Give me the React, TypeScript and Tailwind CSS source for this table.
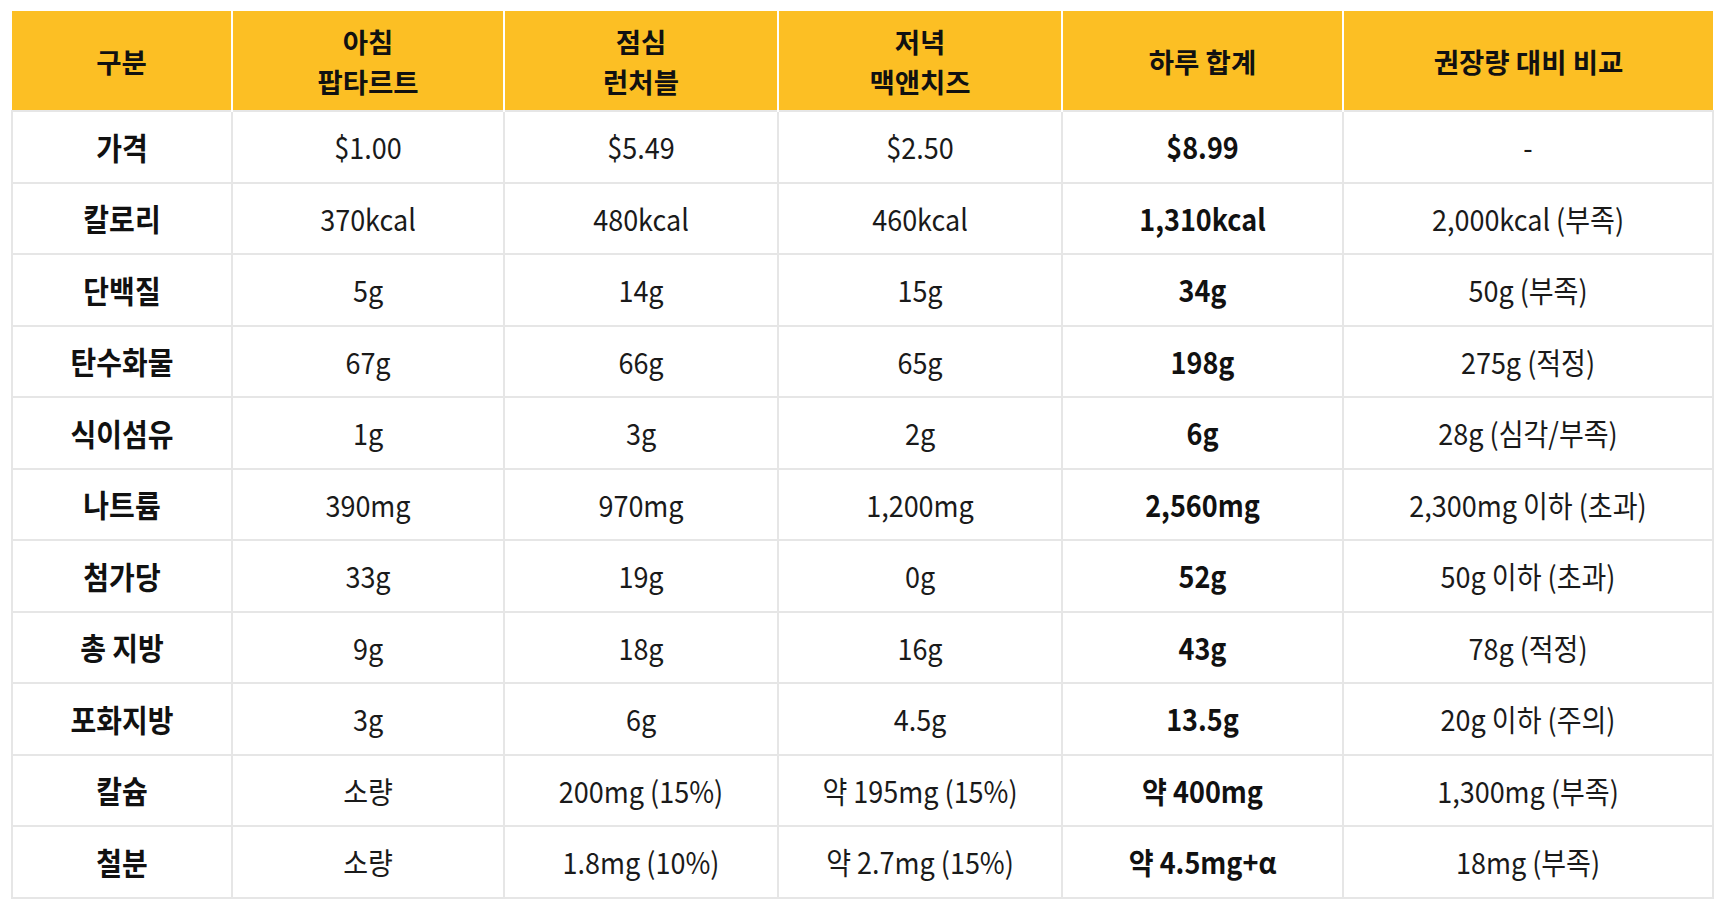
import React from "react";

const headers: string[][] = [
  ["구분"],
  ["아침", "팝타르트"],
  ["점심", "런처블"],
  ["저녁", "맥앤치즈"],
  ["하루 합계"],
  ["권장량 대비 비교"],
];

const rows: string[][] = [
  ["가격", "$1.00", "$5.49", "$2.50", "$8.99", "-"],
  ["칼로리", "370kcal", "480kcal", "460kcal", "1,310kcal", "2,000kcal (부족)"],
  ["단백질", "5g", "14g", "15g", "34g", "50g (부족)"],
  ["탄수화물", "67g", "66g", "65g", "198g", "275g (적정)"],
  ["식이섬유", "1g", "3g", "2g", "6g", "28g (심각/부족)"],
  ["나트륨", "390mg", "970mg", "1,200mg", "2,560mg", "2,300mg 이하 (초과)"],
  ["첨가당", "33g", "19g", "0g", "52g", "50g 이하 (초과)"],
  ["총 지방", "9g", "18g", "16g", "43g", "78g (적정)"],
  ["포화지방", "3g", "6g", "4.5g", "13.5g", "20g 이하 (주의)"],
  ["칼슘", "소량", "200mg (15%)", "약 195mg (15%)", "약 400mg", "1,300mg (부족)"],
  ["철분", "소량", "1.8mg (10%)", "약 2.7mg (15%)", "약 4.5mg+α", "18mg (부족)"],
];

const widths = ["w-[220px]", "w-[272px]", "w-[274px]", "w-[284px]", "w-[281px]", "w-[370px]"];

export default function App() {
  return (
    <div
      className="min-h-screen w-full bg-white pt-[11px] pl-[11px]"
      style={{ fontFamily: '"Noto Sans CJK KR", "Noto Sans", sans-serif' }}
    >
      <table className="w-[1701px] table-fixed border-collapse text-[#1a1a1a]">
        <colgroup>
          {widths.map((w, i) => (
            <col key={i} className={w} />
          ))}
        </colgroup>
        <thead>
          <tr className="h-[100px] bg-[#fcbf24]">
            {headers.map((h, i) => (
              <th
                key={i}
                className="border-x-2 border-white p-0 text-center align-middle text-[27.5px] font-bold leading-[40px] text-[#111] first:border-l-0 last:border-r-0"
              >
                {h.map((line, j) => (
                  <div key={j}>{line}</div>
                ))}
              </th>
            ))}
          </tr>
        </thead>
        <tbody>
          {rows.map((r, ri) => (
            <tr key={ri} className="h-[71.5px]">
              {r.map((c, ci) => (
                <td
                  key={ci}
                  className={`border-2 border-[#e6e6e6] p-0 text-center align-middle leading-none ${
                    ci === 0
                      ? "text-[28px] font-bold text-[#111]"
                      : ci === 4
                      ? "text-[27px] font-bold text-[#111]"
                      : "text-[27px] font-normal"
                  }`}
                >
                  <span className="inline-block scale-y-[1.1]">{c}</span>
                </td>
              ))}
            </tr>
          ))}
        </tbody>
      </table>
    </div>
  );
}
